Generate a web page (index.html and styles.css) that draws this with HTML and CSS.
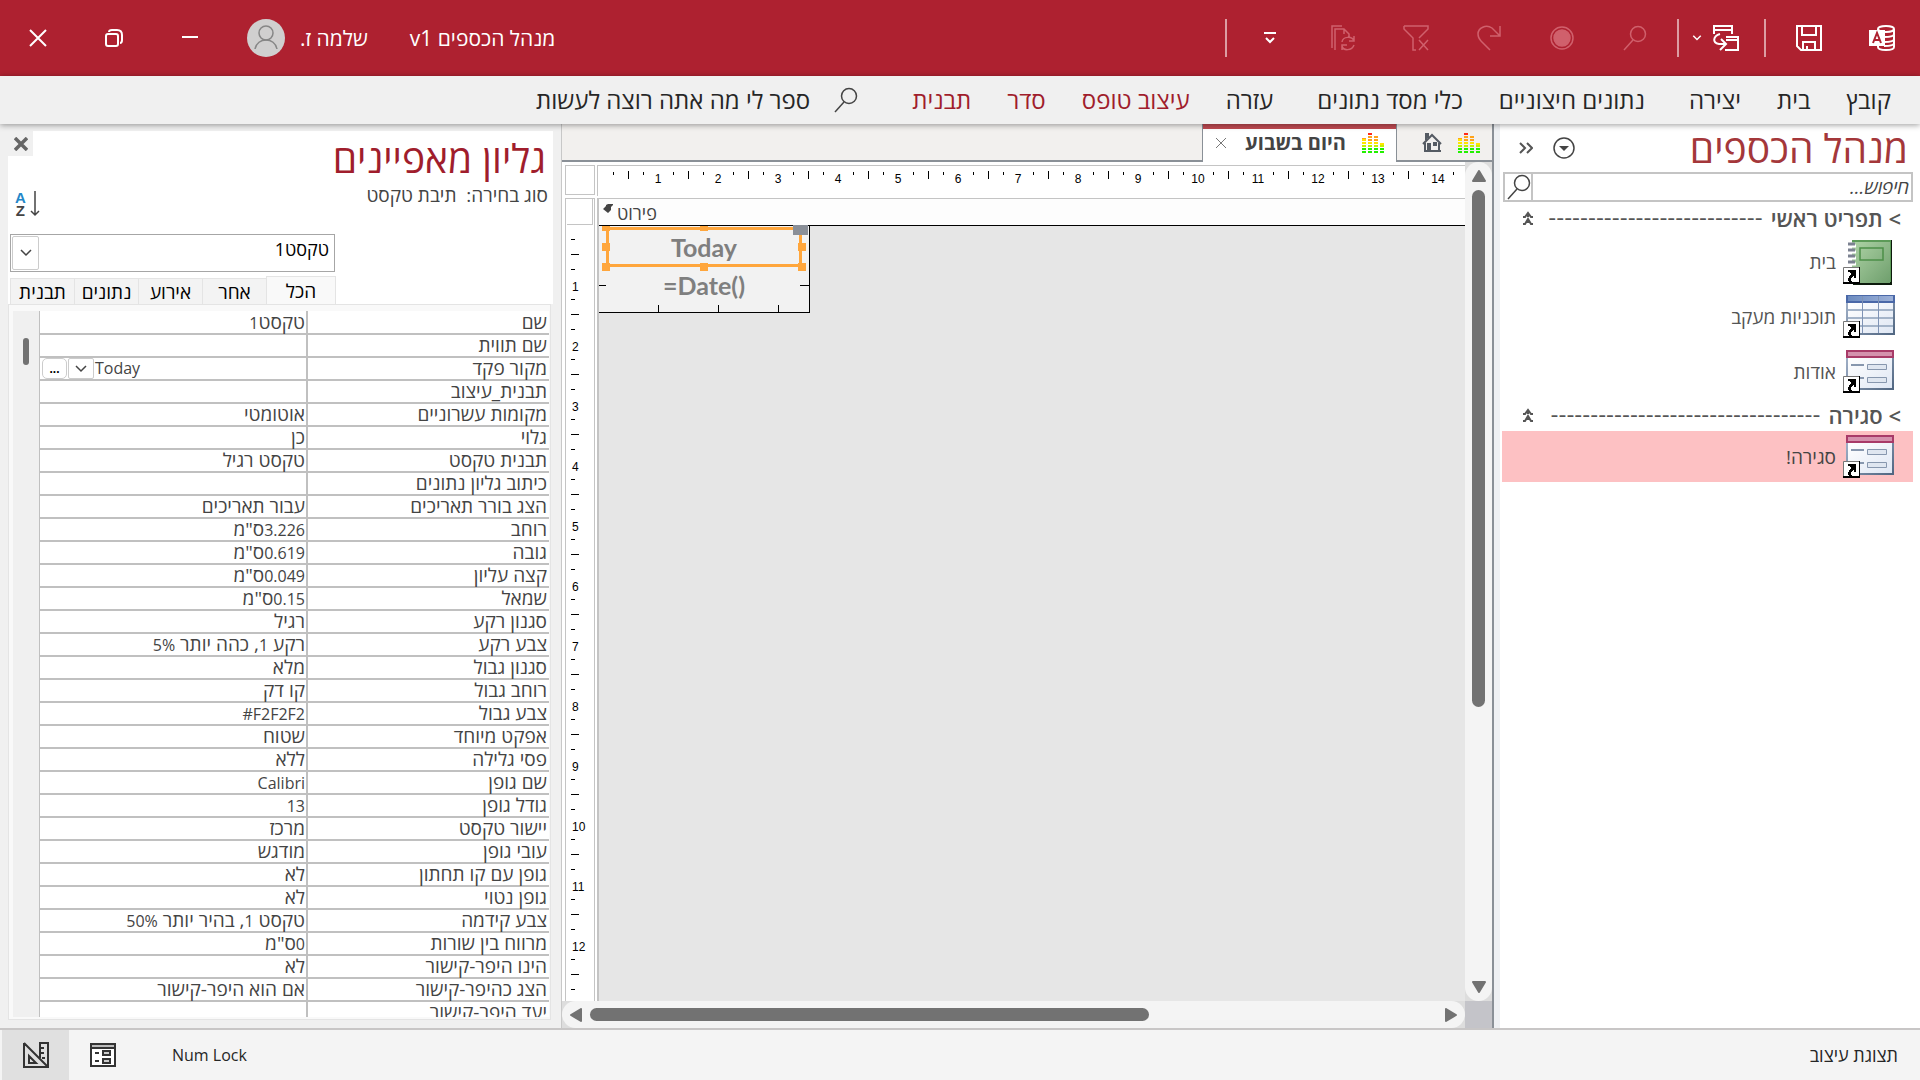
FILE: index.html
```html
<!DOCTYPE html>
<html lang="he" dir="rtl">
<head>
<meta charset="utf-8">
<title>מנהל הכספים v1</title>
<link rel="stylesheet" href="styles.css">
</head>
<body>
<svg class="defs" aria-hidden="true">
  <defs>
    <linearGradient id="g-green" x1="0" y1="0" x2="1" y2="1"><stop offset="0" stop-color="#aed3a6"/><stop offset="1" stop-color="#6f9f6d"/></linearGradient>
    <linearGradient id="g-sheet" x1="0" y1="0" x2="1" y2="1"><stop offset="0" stop-color="#ffffff"/><stop offset="1" stop-color="#dfe7f4"/></linearGradient>
    <linearGradient id="g-frame" x1="0" y1="0" x2="1" y2="1"><stop offset="0" stop-color="#a9b8cf"/><stop offset="1" stop-color="#4f6580"/></linearGradient>
    <linearGradient id="g-blue" x1="0" y1="0" x2="1" y2="0"><stop offset="0" stop-color="#6d8cc0"/><stop offset="1" stop-color="#9db1d8"/></linearGradient>
    <symbol id="i-search" viewBox="0 0 24 26"><circle cx="15" cy="9" r="7.5"/><path d="M10 15 1 25"/></symbol>
    <symbol id="i-shortcut" viewBox="0 0 17 17"><path fill="#fff" stroke="#777" d="M.5 16V.5H16"/><path fill="#fff" d="M1 1h15v15H1z"/><path fill="#000" d="M16 0h1v17H0v-2h16zM5 3h8v8h-2V9h-1v1H9v1H8v3h1v1H6v-1H5v-3h1V9h1V8h1V6H7V5H5z"/></symbol>
    <symbol id="i-form" viewBox="0 0 54 48"><path fill="url(#g-frame)" d="M4 2h48v40H4z"/><path fill="url(#g-sheet)" d="M6 10h44v30H6z"/><path fill="#a83a68" d="M4 2h48v8H4z"/><path fill="#d491ad" d="M6 4h44v4H6z"/><path stroke="#8797ae" stroke-width="2" fill="none" d="M9 17h13M9 30h13"/><path stroke="#8797ae" fill="#dfe6f0" d="M25.500 16.500h19v5h-19zM25.500 29.500h19v5h-19z"/><use href="#i-shortcut" x="1" y="28" width="17" height="17"/></symbol>
    <symbol id="i-table" viewBox="0 0 54 48"><path fill="url(#g-frame)" d="M4 2h49v40H4z"/><path fill="url(#g-sheet)" d="M6 10h45v30H6z"/><path fill="#4a68a8" d="M4 2h49v8H4z"/><path fill="url(#g-blue)" d="M6 3h45v5H6z"/><path stroke="#a4b4c9" stroke-width="2" fill="none" d="M6 17h45M6 25h45M6 33h45"/><path stroke="#7f93b5" fill="none" d="M20.500 3v37M36.500 3v37"/><use href="#i-shortcut" x="1" y="28" width="17" height="17"/></symbol>
    <symbol id="i-book" viewBox="0 0 54 48"><path fill="#0c1a0c" d="M11 2h39v45H11z"/><path fill="#5c9a58" d="M10 2h39v42H10z"/><path fill="url(#g-green)" d="M10 4h38v41H10z"/><path fill="none" stroke="#4c8f48" stroke-width="1.500" d="M18 10h23v12H18z"/><path stroke="#fff" stroke-width="3" d="M10 8h4M10 14h4M10 20h4M10 26h4"/><path stroke="#7c8291" stroke-width="3" d="M6 6h7M6 12h7M6 18h7M6 24h7"/><use href="#i-shortcut" x="1" y="29" width="17" height="17"/></symbol>
    <symbol id="i-eq" viewBox="0 0 22 21"><g stroke-width="4" stroke-dasharray="2 1"><path stroke="#ff2a1a" d="M8 0v3"/><path stroke="#ffa31a" d="M8 3v6M14 3v6M2 5v3"/><path stroke="#ffe600" d="M2 6v6M8 9v3M14 9v3M20 10v2"/><path stroke="#c3f000" d="M2 12v3M8 12v3M14 12v3M20 12v3"/><path stroke="#22f000" d="M2 15v6M8 15v6M14 15v6M20 15v6"/></g></symbol>
    <symbol id="i-down" viewBox="0 0 12 8"><path fill="none" stroke="currentColor" stroke-width="1.500" d="m1 1 5 5 5-5"/></symbol>
    <symbol id="i-collapse" viewBox="0 0 12 14"><path fill="none" stroke="currentColor" stroke-width="2" d="M1 6h2l3-4 3 4h2M1 13h2l3-5 3 5h2M6 2v4M6 8v4"/></symbol>
  </defs>
</svg>

<header class="titlebar">
  <div class="quick">
    <svg class="logo" viewBox="0 0 28 26" width="28" height="26"><g fill="none" stroke="#fff" stroke-width="2"><ellipse cx="18" cy="4" rx="8" ry="3"/><path d="M10 4v18c0 4 16 4 16 0V4M16 12c5 0 10-1 10-3M16 17c5 0 10-1 10-3M16 21c5 0 10-1 10-3"/></g><path fill="#fff" d="M1 5h16v16H1z"/><path fill="none" stroke="#ae2130" stroke-width="2" d="m5 18 4-10 4 10M6 15h6"/></svg>
    <button class="tool" aria-label="שמור"><svg viewBox="0 0 26 26" width="26" height="26"><path d="M1 1h24v24H5l-4-4zM6 1v9h14V1M7 25v-8h12v8M11 21v4"/></svg></button>
    <span class="sep"></span>
    <button class="tool view" aria-label="תצוגה"><svg viewBox="0 0 26 26" width="26" height="26"><path d="M1 9V1h18v8M1 5h18M13 12h12v13H12M13 15h12M7 9c-7 2-8 9-1 10h6M8 14l5 5-6 6"/></svg></button>
    <button class="tool arrow" aria-label="אפשרויות תצוגה"><svg viewBox="0 0 12 8" width="10" height="6"><path d="m1 1 5 5 5-5"/></svg></button>
    <span class="sep"></span>
    <button class="tool" aria-label="חיפוש" disabled><svg width="26" height="26"><use href="#i-search"/></svg></button>
    <button class="tool" aria-label="הקלט" disabled><svg viewBox="0 0 26 26" width="26" height="26"><circle cx="13" cy="13" r="11"/><circle class="solid" cx="13" cy="13" r="8"/></svg></button>
    <button class="tool" aria-label="בצע שוב" disabled><svg viewBox="0 0 26 26" width="26" height="26"><path d="M24 1v10H14M24 11 16 3C10-1 2 3 2 9c0 3 1 5 3 7l9 9"/></svg></button>
    <button class="tool" aria-label="נקה מסנן" disabled><svg viewBox="0 0 26 26" width="26" height="26"><path d="M1 1h24v3l-9 9M1 1v3l9 9v12h3M16 15l9 10M25 15l-9 10"/></svg></button>
    <button class="tool" aria-label="רענן הכל" disabled><svg viewBox="0 0 26 26" width="26" height="26"><path d="M2 23V1h10M5 25V4h9l5 5v3M14 4v5M12 17c1-6 10-6 12-1M24 11v5h-5M24 20c-2 6-11 6-12 1M12 25v-5h5"/></svg></button>
    <button class="tool" aria-label="התאמה אישית"><svg viewBox="0 0 14 12" width="14" height="12"><path d="M1 1h12M3 6l4 4 4-4"/></svg></button>
    <span class="sep"></span>
  </div>
  <h1 class="app-name">מנהל הכספים v1</h1>
  <button class="user"><span>שלמה ז.</span><svg viewBox="0 0 38 38" width="38" height="38"><circle cx="19" cy="19" r="19" fill="#d0cfcf"/><g fill="none" stroke="#868686" stroke-width="1.500"><circle cx="19" cy="14" r="7"/><path d="M8 30c2-12 20-12 22 0"/></g></svg></button>
  <div class="window">
    <button class="tool" aria-label="מזער"><svg viewBox="0 0 18 18" width="18" height="18"><path d="M1 8h16"/></svg></button>
    <button class="tool" aria-label="שחזר"><svg viewBox="0 0 18 18" width="18" height="18"><rect x="1" y="5" width="12" height="12" rx="2"/><path d="M4 3c0-1 1-2 3-2h5c3 0 5 2 5 5v5c0 2-1 3-2 3"/></svg></button>
    <button class="tool" aria-label="סגור"><svg viewBox="0 0 18 18" width="18" height="18"><path d="m1 1 16 16M17 1 1 17"/></svg></button>
  </div>
</header>

<nav class="ribbon">
  <a href="#">קובץ</a>
  <a href="#">בית</a>
  <a href="#">יצירה</a>
  <a href="#" class="wide">נתונים חיצוניים</a>
  <a href="#">כלי מסד נתונים</a>
  <a href="#" class="wide">עזרה</a>
  <a href="#" class="context">עיצוב טופס</a>
  <a href="#" class="context">סדר</a>
  <a href="#" class="context">תבנית</a>
  <button class="tellme"><svg width="24" height="26"><use href="#i-search"/></svg><span>ספר לי מה אתה רוצה לעשות</span></button>
</nav>

<main class="work">
  <aside class="nav-pane">
    <div class="nav-head">
      <h2>מנהל הכספים</h2>
      <button class="round" aria-label="תפריט"><svg viewBox="0 0 22 22" width="22" height="22"><circle cx="11" cy="11" r="10" fill="none" stroke="#444" stroke-width="1.500"/><path fill="#444" d="M6 9h10l-5 5z"/></svg></button>
      <button class="shutter" aria-label="כווץ"><svg viewBox="0 0 14 12" width="14" height="12"><path fill="none" stroke="#555" stroke-width="2" d="m1 1 5 5-5 5M8 1l5 5-5 5"/></svg></button>
    </div>
    <div class="search">
      <input type="text" placeholder="חיפוש..." aria-label="חיפוש">
      <button aria-label="חפש"><svg width="24" height="26"><use href="#i-search"/></svg></button>
    </div>
    <section>
      <h3 class="group"><span>&gt; תפריט ראשי</span><span class="dash">---------------------------</span><svg width="12" height="14"><use href="#i-collapse"/></svg></h3>
      <ul>
        <li><a href="#"><svg width="54" height="48"><use href="#i-book"/></svg>בית</a></li>
        <li><a href="#"><svg width="54" height="48"><use href="#i-table"/></svg>תוכניות מעקב</a></li>
        <li><a href="#"><svg width="54" height="48"><use href="#i-form"/></svg>אודות</a></li>
      </ul>
    </section>
    <section>
      <h3 class="group"><span>&gt; סגירה</span><span class="dash">----------------------------------</span><svg width="12" height="14"><use href="#i-collapse"/></svg></h3>
      <ul>
        <li><a href="#" class="selected"><svg width="54" height="48"><use href="#i-form"/></svg>סגירה!</a></li>
      </ul>
    </section>
  </aside>

  <section class="document">
    <div class="doc-tabs">
      <button class="home-tab" aria-label="בית"><svg width="22" height="21"><use href="#i-eq"/></svg><svg viewBox="0 0 20 20" width="20" height="20"><path fill="none" stroke="#555b63" stroke-width="2" d="m1 11 9-9 9 9M3 10v8h14v-8M4 7V1h2v4"/><path fill="#555b63" d="M2 17h17v2H2zM5 10h4v8H5zM11 9h4v4h-4z"/></svg></button>
      <div class="doc-tab"><svg width="22" height="21"><use href="#i-eq"/></svg><span>היום בשבוע</span><button aria-label="סגור"><svg viewBox="0 0 12 12" width="12" height="12"><path stroke="#777" d="m1 1 10 10M11 1 1 11"/></svg></button></div>
    </div>
    <div class="designer" dir="ltr">
      <div class="corner"></div>
      <ol class="ruler-h"><li>1</li><li>2</li><li>3</li><li>4</li><li>5</li><li>6</li><li>7</li><li>8</li><li>9</li><li>10</li><li>11</li><li>12</li><li>13</li><li>14</li></ol>
      <div class="ruler-v">
        <div class="selector"></div>
        <ol><li>1</li><li>2</li><li>3</li><li>4</li><li>5</li><li>6</li><li>7</li><li>8</li><li>9</li><li>10</li><li>11</li><li>12</li></ol>
      </div>
      <div class="surface">
        <div class="band"><svg viewBox="0 0 10 9" width="10" height="9"><path fill="#444" d="M10 0v1L8 3v3L5 9 0 5l3-3V1l2-1z"/></svg><span>פירוט</span></div>
        <div class="form">
          <div class="field active">Today<i class="h nw"></i><i class="h n"></i><i class="h w"></i><i class="h e"></i><i class="h sw"></i><i class="h s"></i><i class="h se"></i><i class="grip"></i></div>
          <div class="field">=Date()</div>
        </div>
      </div>
      <div class="scroll-v">
        <svg viewBox="0 0 14 12" width="14" height="12"><path fill="#727272" stroke="#727272" stroke-width="2" stroke-linejoin="round" d="m7 1 6 10H1z"/></svg>
        <div class="track"><div class="thumb"></div></div>
        <svg viewBox="0 0 14 12" width="14" height="12"><path fill="#727272" stroke="#727272" stroke-width="2" stroke-linejoin="round" d="m7 11 6-10H1z"/></svg>
      </div>
      <div class="scroll-h">
        <svg viewBox="0 0 12 14" width="12" height="14"><path fill="#727272" stroke="#727272" stroke-width="2" stroke-linejoin="round" d="m1 7 10-6v12z"/></svg>
        <div class="track"><div class="thumb"></div></div>
        <svg viewBox="0 0 12 14" width="12" height="14"><path fill="#727272" stroke="#727272" stroke-width="2" stroke-linejoin="round" d="M11 7 1 1v12z"/></svg>
      </div>
      <div class="size-box"></div>
    </div>
  </section>

  <aside class="props">
    <div class="props-head">
      <div class="props-title">
        <h2>גליון מאפיינים</h2>
        <p>סוג בחירה:&nbsp; תיבת טקסט</p>
      </div>
      <div class="props-tools">
        <button class="close" aria-label="סגור"><svg viewBox="0 0 14 14" width="14" height="14"><path stroke="#666" stroke-width="3.500" d="m1 1 12 12M13 1 1 13"/></svg></button>
        <button class="sort" aria-label="מיין"><span><b>A</b><b>Z</b></span><svg viewBox="0 0 10 26" width="10" height="26"><path fill="none" stroke="#444" stroke-width="1.500" d="M5 0v24M1 20l4 4 4-4"/></svg></button>
      </div>
    </div>
    <div class="combo"><select aria-label="פקד"><option>טקסט1</option></select><span class="drop"><svg width="12" height="8"><use href="#i-down"/></svg></span></div>
    <div class="tabs" role="tablist">
      <button role="tab" class="on">הכל</button><button role="tab">אחר</button><button role="tab">אירוע</button><button role="tab">נתונים</button><button role="tab">תבנית</button>
    </div>
    <div class="sheet">
      <div class="rows">
        <table>
          <tr><th>שם</th><td>טקסט<span class="num">1</span></td></tr>
          <tr><th>שם תווית</th><td></td></tr>
          <tr><th>מקור פקד</th><td class="edit"><div><span class="num">Today</span><button aria-label="רשימה"><svg width="12" height="8"><use href="#i-down"/></svg></button><button class="more" aria-label="בונה">...</button></div></td></tr>
          <tr><th>תבנית_עיצוב</th><td></td></tr>
          <tr><th>מקומות עשרוניים</th><td>אוטומטי</td></tr>
          <tr><th>גלוי</th><td>כן</td></tr>
          <tr><th>תבנית טקסט</th><td>טקסט רגיל</td></tr>
          <tr><th>כיתוב גליון נתונים</th><td></td></tr>
          <tr><th>הצג בורר תאריכים</th><td>עבור תאריכים</td></tr>
          <tr><th>רוחב</th><td><span class="num">3.226</span>ס"מ</td></tr>
          <tr><th>גובה</th><td><span class="num">0.619</span>ס"מ</td></tr>
          <tr><th>קצה עליון</th><td><span class="num">0.049</span>ס"מ</td></tr>
          <tr><th>שמאל</th><td><span class="num">0.15</span>ס"מ</td></tr>
          <tr><th>סגנון רקע</th><td>רגיל</td></tr>
          <tr><th>צבע רקע</th><td>רקע <span class="num">1</span>, כהה יותר <span class="num">5%</span></td></tr>
          <tr><th>סגנון גבול</th><td>מלא</td></tr>
          <tr><th>רוחב גבול</th><td>קו דק</td></tr>
          <tr><th>צבע גבול</th><td><bdi class="num" dir="ltr">#F2F2F2</bdi></td></tr>
          <tr><th>אפקט מיוחד</th><td>שטוח</td></tr>
          <tr><th>פסי גלילה</th><td>ללא</td></tr>
          <tr><th>שם גופן</th><td><span class="num">Calibri</span></td></tr>
          <tr><th>גודל גופן</th><td><span class="num">13</span></td></tr>
          <tr><th>יישור טקסט</th><td>מרכז</td></tr>
          <tr><th>עובי גופן</th><td>מודגש</td></tr>
          <tr><th>גופן עם קו תחתון</th><td>לא</td></tr>
          <tr><th>גופן נטוי</th><td>לא</td></tr>
          <tr><th>צבע קידמה</th><td>טקסט <span class="num">1</span>, בהיר יותר <span class="num">50%</span></td></tr>
          <tr><th>מרווח בין שורות</th><td><span class="num">0</span>ס"מ</td></tr>
          <tr><th>הינו היפר-קישור</th><td>לא</td></tr>
          <tr><th>הצג כהיפר-קישור</th><td>אם הוא היפר-קישור</td></tr>
          <tr><th>יעד היפר-קישור</th><td></td></tr>
        </table>
      </div>
      <div class="sheet-scroll"><div class="thumb"></div></div>
    </div>
  </aside>
</main>

<footer class="status">
  <span class="mode">תצוגת עיצוב</span>
  <span class="lock">Num Lock</span>
  <button aria-label="תצוגת טופס"><svg viewBox="0 0 26 24" width="26" height="24"><path fill="#fff" stroke="#333" stroke-width="2" d="M1 1h24v22H1z"/><path fill="#bbb" stroke="#333" stroke-width="2" d="M1 1h24v4H1z"/><path stroke="#333" stroke-width="2" fill="#ccc" d="M5 10h4M5 18h4M13 8h7v4h-7zM13 16h7v4h-7z"/></svg></button>
  <button class="on" aria-label="תצוגת עיצוב"><svg viewBox="0 0 26 26" width="26" height="26"><path fill="none" stroke="#333" stroke-width="2" d="M1 1v24h24V1h-8v15M1 1l24 24M6 14v7h7zM17 6h4M17 11h4M19 16h3"/></svg></button>
</footer>
</body>
</html>
```
FILE: styles.css
```css
* { box-sizing: border-box; }
html, body { height: 100%; }
body {
  margin: 0;
  display: flex;
  flex-direction: column;
  overflow: hidden;
  background: #f0f0f0;
  color: #444;
  font: 18px/22px "Open Sans", "Noto Sans", "DejaVu Sans", sans-serif;
}
h1, h2, h3, p, ul, ol { margin: 0; padding: 0; font-weight: 400; }
ul, ol { list-style: none; }
a { color: inherit; text-decoration: none; }
button { margin: 0; padding: 0; border: 0; background: none; color: inherit; font: inherit; }
svg { display: block; flex: none; }
.defs { position: absolute; width: 0; height: 0; }

/* title bar */
.titlebar { flex: none; display: flex; align-items: center; height: 76px; padding: 0 24px 0 29px; background: #ae2130; color: #fff; }
.quick { display: flex; align-items: center; }
.logo { margin-inline-end: 23px; }
.tool { display: flex; justify-content: center; }
.tool svg { fill: none; stroke: #fff; stroke-width: 2; overflow: visible; }
.quick .tool { width: 73px; }
.quick .view { width: 26px; margin-inline: 19px 11px; }
.quick .arrow { width: 10px; margin-inline-end: 7px; }
.tool:disabled svg { stroke: #d0606c; stroke-width: 1.5; }
.tool .solid { fill: #d0606c; }
.sep { width: 2px; height: 38px; margin: 0 6px; background: #dc9da3; }
.app-name { margin-inline-start: auto; font-size: 21px; }
.user { display: flex; align-items: center; gap: 15px; margin-inline-start: 42px; font-size: 21px; }
.window { display: flex; gap: 58px; margin-inline-start: 48px; }
.window .tool { width: 18px; }

/* ribbon */
.ribbon { position: relative; flex: none; display: flex; align-items: center; gap: 36px; height: 48px; padding: 0 29px; background: #f0f0f0; color: #262626; font-size: 24px; box-shadow: 0 1px 6px rgba(0, 0, 0, .4); }
.wide { margin-inline-start: 8px; }
.context { color: #a01d2c; }
.tellme { display: flex; align-items: center; gap: 24px; margin-inline-start: 18px; }
.tellme svg, .search svg { fill: none; stroke: #444; stroke-width: 1.5; }

/* work area */
.work { flex: 1; min-height: 0; display: grid; grid-template-columns: 428px minmax(0, 1fr) 561px; }

/* navigation pane */
.nav-pane { padding: 0 7px 0 2px; border-left: 2px solid #8a9097; background: linear-gradient(to left, #fff calc(100% - 6px), #eef0f3 0); }
.nav-head { display: flex; align-items: center; height: 48px; padding: 0 5px 0 23px; }
.nav-head h2 { margin-inline-end: auto; color: #a4373a; font-size: 39px; line-height: 48px; }
.round { margin-inline-end: 20px; }
.search { display: flex; height: 30px; margin-left: 7px; border: 2px solid #c4c4c4; background: #fff; }
.search input { flex: 1; min-width: 0; padding: 0 2px; border: 0; color: #444; font: italic 19px/26px "Open Sans", "DejaVu Sans", sans-serif; }
.search input::placeholder { color: #444; opacity: 1; }
.search button { width: 28px; border-right: 2px solid #c4c4c4; }
.group { display: flex; align-items: center; gap: 8px; height: 32px; padding: 0 12px 0 26px; color: #555; font-size: 22px; font-weight: 600; }
.dash { margin-inline-end: auto; font-family: "DejaVu Sans", sans-serif; font-weight: 400; white-space: nowrap; }
.nav-pane li a { display: flex; align-items: center; gap: 6px; height: 55px; padding-right: 17px; color: #555; font-size: 19px; }
.nav-pane li .selected { height: 51px; margin-left: 6px; background: #fdc1c3; color: #444; }

/* document */
.document { display: flex; flex-direction: column; min-width: 0; border-left: 1px solid #c8c8c8; background: #fff; }
.doc-tabs { flex: none; display: flex; height: 38px; background: #f2f0ee; box-shadow: inset 0 -2px #8a9097; }
.home-tab { display: flex; align-items: center; gap: 16px; width: 95px; padding-right: 12px; }
.doc-tab { display: flex; align-items: center; width: 195px; padding: 0 12px; border: solid #8a9097; border-width: 0 1px; background: #fff; box-shadow: inset 0 5px #c04a52; font-size: 20px; font-weight: 700; }
.doc-tab span { margin: 0 16px 0 auto; }
.designer { flex: 1; min-height: 0; display: grid; grid-template: 36px minmax(0, 1fr) 27px / 35px minmax(0, 1fr) 27px; background: #fff; }
.corner { width: 30px; height: 30px; margin: 3px 0 0 3px; border: 1px solid #c4c4c4; }
.ruler-h, .ruler-v ol { color: #000; font: 12px/12px "Liberation Sans", sans-serif; text-align: center; }
.ruler-h { display: flex; overflow: hidden; height: 31px; margin-top: 3px; padding: 7px 0 0 30px; border: solid #c4c4c4; border-width: 1px 0 0 1px;
  background: repeating-linear-gradient(90deg, transparent 0 15px, #000 15px 16px, transparent 16px 30px) 0 6px / 100% 3px no-repeat, repeating-linear-gradient(90deg, transparent 0 30px, #000 30px 31px, transparent 31px 60px) 0 5px / 100% 8px no-repeat; }
.ruler-h li { flex: none; width: 60px; }
.ruler-v { display: flex; flex-direction: column; min-height: 0; width: 30px; margin-left: 3px; border: solid #c4c4c4; border-width: 1px 1px 0; }
.selector { flex: none; height: 26px; margin: 0 1px; border: solid #c4c4c4; border-width: 0 1px 1px 0; }
.ruler-v ol { flex: 1; min-height: 0; overflow: hidden; padding-top: 32px;
  background: repeating-linear-gradient(transparent 0 14px, #000 14px 15px, transparent 15px 30px) 5px 0 / 4px 100% no-repeat, repeating-linear-gradient(transparent 0 29px, #000 29px 30px, transparent 30px 60px) 5px 0 / 8px 100% no-repeat; }
.ruler-v li { display: flex; align-items: center; height: 60px; padding-left: 6px; }
.surface { min-width: 0; overflow: hidden; border-left: 2px solid #c4c4c4; background: #e6e6e6; }
.band { display: flex; height: 28px; padding: 5px 4px 0; gap: 4px; border-top: 1px solid #c4c4c4; border-bottom: 1px solid #000; background: #fdfdfd; line-height: 18px; }
.form { position: relative; width: 211px; height: 87px; padding: 1px 7px; border: solid #000; border-width: 0 1px 1px 0;
  background: linear-gradient(#000, #000) 0 59px / 7px 1px no-repeat, linear-gradient(#000, #000) 100% 59px / 9px 1px no-repeat, repeating-linear-gradient(90deg, transparent 0 59px, #000 59px 60px) 0 100% / 195px 7px no-repeat, #f2f2f2; }
.field { position: relative; display: flex; justify-content: center; width: 196px; height: 40px; color: #7f7f7f; font: 700 25px/36px Lato, sans-serif; }
.active { border: 3px solid #ffa63c; line-height: 34px; }
.h { position: absolute; width: 8px; height: 8px; background: #ffa63c; }
.nw, .w, .sw { left: -7px; }
.e, .se { right: -7px; }
.n, .s { left: 91px; }
.nw, .n { top: -4px; height: 5px; }
.w, .e { top: 13px; }
.sw, .s, .se { bottom: -7px; }
.grip { position: absolute; top: -5px; right: -9px; width: 15px; height: 10px; background: #8a8f98; }

.scroll-v { grid-row: 1 / 3; grid-column: 3; display: flex; flex-direction: column; align-items: center; gap: 8px; padding: 8px 0; border-radius: 14px; background: #f4f4f4; box-shadow: 0 0 0 9px #ddd; clip-path: inset(0); }
.track { flex: 1; min-height: 0; }
.thumb { border-radius: 7px; background: #727272; }
.scroll-v .thumb { width: 13px; height: 66%; }
.scroll-h { grid-row: 3; grid-column: 1 / 3; display: flex; align-items: center; gap: 8px; padding: 0 8px; border-radius: 14px; background: #f4f4f4; box-shadow: 0 0 0 9px #ddd; clip-path: inset(0); }
.scroll-h .thumb { width: 66%; height: 13px; }
.size-box { background: #c4c4c9; }

/* property sheet */
.props { display: flex; flex-direction: column; min-height: 0; padding: 7px 8px 8px; font-size: 19px; }
.props-head { flex: none; display: flex; justify-content: space-between; height: 103px; padding-right: 5px; background: #fff; }
.props-title h2 { padding: 0 2px; color: #a01d2c; font-size: 39px; line-height: 54px; }
.props-title p { line-height: 20px; }
.close { display: flex; align-items: center; justify-content: center; width: 25px; height: 25px; background: #f0f0f0; }
.sort { display: flex; gap: 4px; margin: 35px 7px 0; }
.sort b { display: block; font: 700 15px/13px "Liberation Sans", sans-serif; color: #444; }
.sort b:first-child { color: #2487c9; }
.props-tools { direction: ltr; }
.combo { position: relative; flex: none; display: flex; justify-content: flex-end; height: 42px; padding: 0 2px 4px; background: #fff; }
.combo select { width: 325px; padding: 0 5px 8px; border: 1px solid #a6a6a6; background: #fff; appearance: none; color: #000; font: inherit; font-size: 18px; }
.drop { position: absolute; left: 4px; top: 2px; display: grid; place-items: center; width: 27px; height: 34px; border: 1px solid #ccc; border-radius: 2px; pointer-events: none; }
.tabs { flex: none; display: flex; justify-content: flex-end; align-items: flex-end; height: 28px; padding-left: 2px; background: #fff; color: #000; }
.tabs button { width: 64px; height: 26px; border: 1px solid #e4e4e4; border-width: 1px 0 0 1px; background: #f3f3f3; }
.tabs .on { width: 70px; height: 28px; border-width: 1px 1px 0; background: #f9f9f9; }
.sheet { flex: 1; min-height: 0; display: flex; margin-right: 2px; padding: 6px 1px 2px 4px; border: 1px solid #e4e4e4; background: #f9f9f9; }
.rows { flex: 1; min-width: 0; overflow: hidden; border-left: 1px solid #c0c0c0; }
.rows table { width: 100%; border-collapse: collapse; table-layout: fixed; background: #fff; }
.rows th, .rows td { height: 23px; padding: 0 2px; border-bottom: 2px solid #c0c0c0; font-weight: 400; line-height: 21px; text-align: right; white-space: nowrap; }
.rows th { width: 242px; border-left: 2px solid #c0c0c0; }
.rows td { padding-right: 1px; }
.num { font-size: 16px; line-height: 20px; }
.edit div { display: flex; justify-content: flex-end; gap: 1px; }
.edit button { display: grid; place-items: center; width: 26px; height: 21px; border: 1px solid #ccc; border-radius: 2px; background: #fff; }
.edit .more { width: 25px; border-radius: 5px; color: #000; font: 700 12px/12px "Liberation Sans", sans-serif; }
.sheet-scroll { flex: none; width: 26px; padding: 27px 10px; background: #f0f0f0; }
.sheet-scroll .thumb { width: 6px; height: 27px; }

/* status bar */
.status { flex: none; display: flex; align-items: center; height: 52px; padding: 0 22px 0 2px; border-top: 2px solid #c8c6c6; background: #f4f4f4; color: #262626; }
.lock { margin: 0 auto 0 36px; font-size: 16px; }
.status button { display: grid; place-items: center; width: 67px; height: 100%; }
.status .on { background: #e0e0e0; }
```
